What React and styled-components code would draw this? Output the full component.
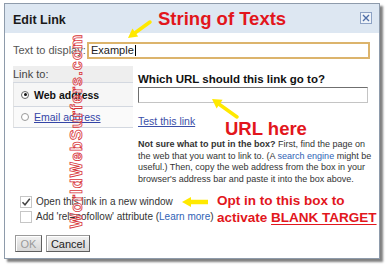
import styled, { createGlobalStyle } from 'styled-components';

const GlobalStyle = createGlobalStyle`
  html, body {
    margin: 0;
    padding: 0;
    background: #fff;
  }
  body {
    font-family: "Liberation Sans", Arial, sans-serif;
  }
`;

const Stage = styled.div`
  position: relative;
  width: 389px;
  height: 270px;
  overflow: hidden;
  padding: 3px 0 0 4px;
  box-sizing: border-box;
`;

const Dialog = styled.div`
  width: 376px;
  height: 256px;
  box-sizing: border-box;
  border: 1px solid #8e9bab;
  box-shadow: 3px 3px 2px rgba(60, 60, 60, 0.65);
  background: #fff;
  display: flex;
  flex-direction: column;
`;

const TitleBar = styled.div`
  height: 29px;
  flex-shrink: 0;
  background: #dde7f2;
  display: flex;
  align-items: center;
  justify-content: space-between;
  padding: 0 7px 0 8px;
`;

const Title = styled.div`
  padding-top: 3px;
  font-size: 12.5px;
  font-weight: bold;
  color: #1a1a1a;
`;

const CloseButton = styled.div`
  width: 12px;
  height: 12px;
  box-sizing: border-box;
  border: 1px solid #8da2c4;
  background: #eef3f9;
  display: flex;
  align-items: center;
  justify-content: center;
  margin-top: -1px;
`;

const Body = styled.div`
  padding: 0 9px 0 8px;
  display: flex;
  flex-direction: column;
`;

const DisplayRow = styled.div`
  margin-top: 9px;
  height: 17px;
  display: flex;
`;

const FieldLabel = styled.div`
  width: 74px;
  flex-shrink: 0;
  font-size: 11px;
  line-height: 17px;
  color: #555;
  white-space: nowrap;
  overflow: hidden;
`;

const TextInput = styled.div`
  flex: 1;
  height: 17px;
  box-sizing: border-box;
  border: 2px solid #dcb46c;
  padding-left: 2px;
  font-size: 11px;
  line-height: 13px;
  color: #222;
  display: flex;
  align-items: center;
`;

const Caret = styled.span`
  display: inline-block;
  width: 1px;
  height: 11px;
  background: #000;
  margin-left: 1px;
`;

const Main = styled.div`
  margin-top: 7px;
  display: grid;
  grid-template-columns: 120px 230px;
  column-gap: 5px;
  align-items: start;
`;

const LeftPanel = styled.div`
  display: flex;
  flex-direction: column;
`;

const PanelHeader = styled.div`
  height: 16px;
  background: #eeeeee;
  border-bottom: 1px solid #d3d8e0;
  font-size: 11px;
  line-height: 17px;
  color: #444;
`;

const LinkType = styled.div`
  height: ${(p) => p.$height}px;
  display: flex;
  align-items: center;
  gap: 5px;
  padding-left: 7px;
  background: ${(p) => (p.$selected ? '#f6f6f6' : '#fafafa')};
  border-left: 1px solid #e2e2e2;
  border-bottom: 1px solid #d3d8e0;
  font-size: 10.5px;
  font-weight: ${(p) => (p.$selected ? 'bold' : 'normal')};
  color: ${(p) => (p.$selected ? '#111' : '#3344a6')};
  text-decoration: ${(p) => (p.$selected ? 'none' : 'underline')};
`;

const Radio = styled.span`
  width: 8px;
  height: 8px;
  box-sizing: border-box;
  border-radius: 50%;
  border: 1px solid ${(p) => (p.$on ? '#666' : '#999')};
  background: #fff;
  display: flex;
  align-items: center;
  justify-content: center;
  &::after {
    content: '';
    width: 3px;
    height: 3px;
    border-radius: 50%;
    background: ${(p) => (p.$on ? '#111' : 'transparent')};
  }
`;

const RightCol = styled.div`
  padding-top: 7px;
  display: flex;
  flex-direction: column;
`;

const Heading = styled.div`
  font-size: 11.5px;
  line-height: 13px;
  font-weight: bold;
  color: #111;
  margin-bottom: 1px;
  white-space: nowrap;
`;

const UrlInput = styled.div`
  height: 16px;
  box-sizing: border-box;
  border: 1px solid;
  border-color: #6f6f6f #c4c4c4 #c4c4c4 #6f6f6f;
  background: #fff;
`;

const TestLink = styled.div`
  margin-top: 12px;
  font-size: 10.5px;
  line-height: 13px;
  color: #3b4fa8;
  text-decoration: underline;
`;

const Help = styled.p`
  margin: 11px 0 0;
  font-size: 9px;
  line-height: 11.5px;
  color: #333;
  white-space: nowrap;
`;

const InlineLink = styled.span`
  color: #2f62b5;
`;

const Options = styled.div`
  margin-top: 9px;
  padding-left: 7px;
  display: flex;
  flex-direction: column;
`;

const OptionRow = styled.div`
  height: 15px;
  display: flex;
  align-items: center;
  gap: 4px;
  font-size: 10px;
  color: #333;
  white-space: nowrap;
`;

const CheckBox = styled.span`
  width: 12px;
  height: 12px;
  box-sizing: border-box;
  border: 1px solid #c6c6c6;
  background: #fff;
  display: flex;
  align-items: center;
  justify-content: center;
`;

const Buttons = styled.div`
  margin-top: 11px;
  padding-left: 2px;
  display: flex;
  gap: 4px;
`;

const Button = styled.div`
  width: ${(p) => p.$width}px;
  height: 17px;
  box-sizing: border-box;
  border: 1px solid;
  border-color: #9a9a9a #5e5e5e #5e5e5e #9a9a9a;
  box-shadow: inset 1px 1px 0 #fff;
  background: linear-gradient(#f2f2f2, #d6d6d6);
  display: flex;
  align-items: center;
  justify-content: center;
  font-size: 11px;
  color: ${(p) => (p.$disabled ? '#9a9a9a' : '#222')};
`;

const Callout = styled.div`
  position: absolute;
  left: ${(p) => p.$x}px;
  top: ${(p) => p.$y}px;
  font-size: ${(p) => p.$size}px;
  line-height: ${(p) => p.$lh}px;
  font-weight: bold;
  color: #e2161c;
  white-space: nowrap;
`;

const Underlined = styled.span`
  text-decoration: underline;
  text-decoration-thickness: 1px;
  text-underline-offset: 2px;
`;

const Watermark = styled.div`
  position: absolute;
  left: -28px;
  top: 123px;
  width: 210px;
  height: 16px;
  transform: rotate(-90deg);
  text-align: center;
  font-size: 16px;
  line-height: 16px;
  font-weight: bold;
  letter-spacing: 1.2px;
  color: rgba(255, 255, 255, 0.55);
  -webkit-text-stroke: 0.8px #d8343a;
  white-space: nowrap;
`;

const ArrowLayer = styled.svg`
  position: absolute;
  left: 0;
  top: 0;
  pointer-events: none;
`;

const YELLOW = '#ffe900';

function Arrows() {
  return (
    <ArrowLayer width="389" height="270" viewBox="0 0 389 270">
      <line x1="150" y1="22" x2="135.5" y2="32.5" stroke={YELLOW} strokeWidth="3.5" strokeLinecap="round" />
      <polygon points="128,38 138.2,36.5 132.4,28.6" fill={YELLOW} />
      <line x1="237" y1="117" x2="219.5" y2="104.5" stroke={YELLOW} strokeWidth="3.5" strokeLinecap="round" />
      <polygon points="212,99 222.6,99.8 216.6,108.5" fill={YELLOW} />
      <line x1="208" y1="202" x2="189" y2="202" stroke={YELLOW} strokeWidth="4.5" />
      <polygon points="182,202 191,197 191,207" fill={YELLOW} />
    </ArrowLayer>
  );
}

export default function App() {
  return (
    <>
      <GlobalStyle />
      <Stage>
        <Dialog>
          <TitleBar>
            <Title>Edit Link</Title>
            <CloseButton>
              <svg width="8" height="8" viewBox="0 0 8 8">
                <path d="M1 1 L7 7 M7 1 L1 7" stroke="#4f6fa8" strokeWidth="1.4" />
              </svg>
            </CloseButton>
          </TitleBar>
          <Body>
            <DisplayRow>
              <FieldLabel>Text to display:</FieldLabel>
              <TextInput>
                Example
                <Caret />
              </TextInput>
            </DisplayRow>
            <Main>
              <LeftPanel>
                <PanelHeader>Link to:</PanelHeader>
                <LinkType $height={23} $selected>
                  <Radio $on />
                  Web address
                </LinkType>
                <LinkType $height={20}>
                  <Radio />
                  Email address
                </LinkType>
              </LeftPanel>
              <RightCol>
                <Heading>Which URL should this link go to?</Heading>
                <UrlInput />
                <TestLink>Test this link</TestLink>
                <Help>
                  <b>Not sure what to put in the box?</b> First, find the page on
                  <br />
                  the web that you want to link to. (A <InlineLink>search engine</InlineLink> might be
                  <br />
                  useful.) Then, copy the web address from the box in your
                  <br />
                  browser's address bar and paste it into the box above.
                </Help>
              </RightCol>
            </Main>
            <Options>
              <OptionRow>
                <CheckBox>
                  <svg width="10" height="10" viewBox="0 0 10 10">
                    <path d="M1.5 5.2 L4 7.8 L8.8 1.8" fill="none" stroke="#444" strokeWidth="1.5" />
                  </svg>
                </CheckBox>
                Open this link in a new window
              </OptionRow>
              <OptionRow>
                <CheckBox />
                <span>
                  Add 'rel=nofollow' attribute (<InlineLink>Learn more</InlineLink>)
                </span>
              </OptionRow>
            </Options>
            <Buttons>
              <Button $width={27} $disabled>OK</Button>
              <Button $width={44}>Cancel</Button>
            </Buttons>
          </Body>
        </Dialog>

        <Arrows />

        <Callout $x={158} $y={10} $size={18.5} $lh={18.5}>String of Texts</Callout>
        <Callout $x={225} $y={120} $size={18.5} $lh={18.5}>URL here</Callout>
        <Callout $x={217} $y={191.5} $size={13.5} $lh={17}>
          Opt in to this box to
          <br />
          activate <Underlined>BLANK TARGET</Underlined>
        </Callout>

        <Watermark>WorldWebSurfers.com</Watermark>
      </Stage>
    </>
  );
}
